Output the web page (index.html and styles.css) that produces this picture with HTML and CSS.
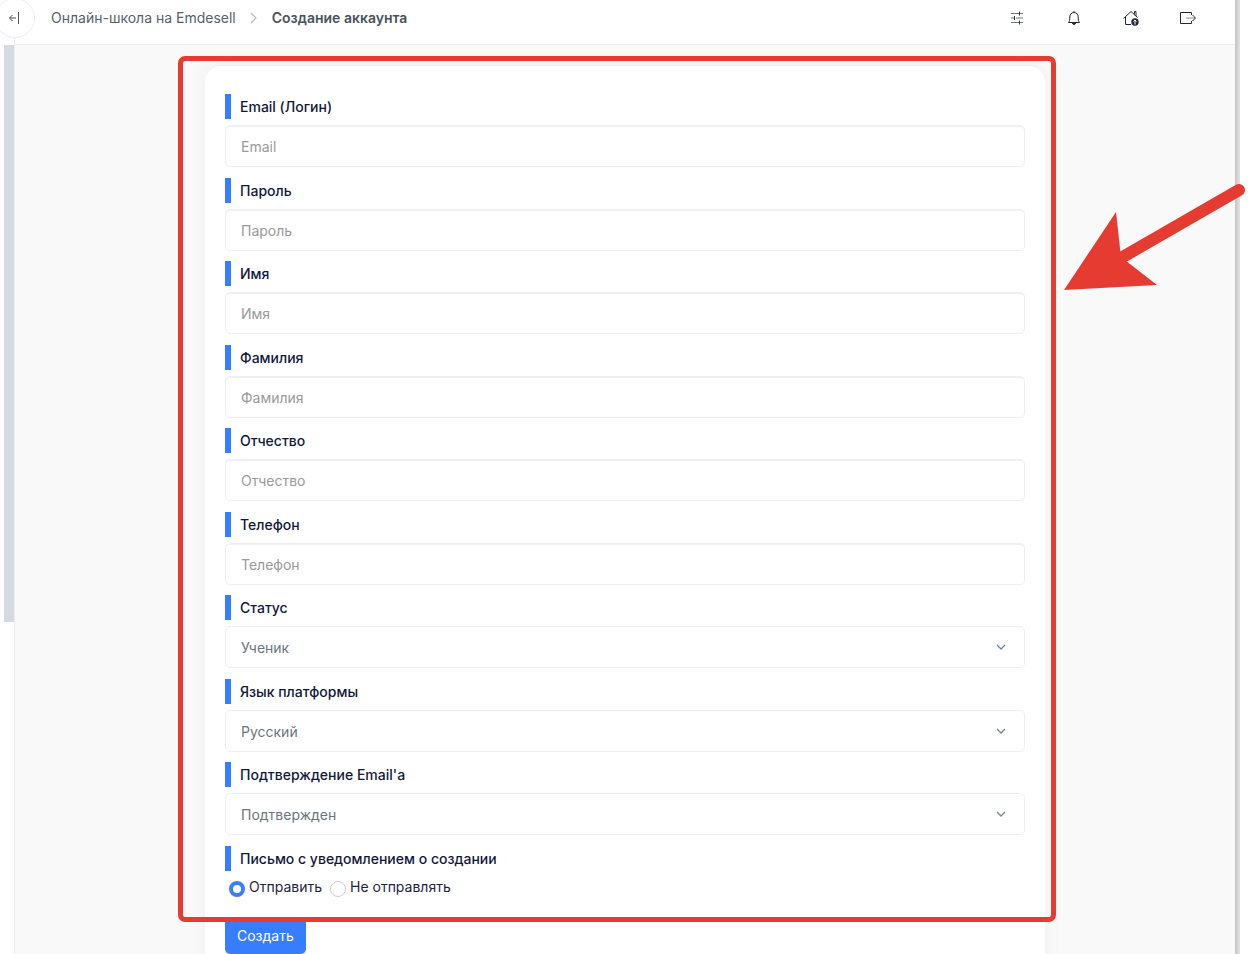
FILE: index.html
```html
<!DOCTYPE html>
<html lang="ru">
<head>
<meta charset="utf-8">
<title>Создание аккаунта</title>
<link rel="stylesheet" href="styles.css">
</head>
<body>
<div class="app">
  <aside class="sidebar">
    <div class="sidebar-thumb"></div>
    <button class="collapse" type="button" aria-label="Свернуть меню">
      <svg width="12" height="12" viewBox="0 0 12 12" fill="none" stroke="#4a4f58"><path d="M7 6H.5M3.500 3 .5 6l3 3"/><path d="M9.500 0v12"/></svg>
    </button>
  </aside>
  <div class="content">
    <header class="topbar">
      <nav class="crumbs" aria-label="Навигация">
        <a class="crumb" href="#">Онлайн-школа на Emdesell</a>
        <svg width="8" height="12" viewBox="0 0 8 12" fill="none" stroke="#b3b8be" stroke-width="1.2"><path d="M1 1l5 5-5 5"/></svg>
        <span class="crumb-current">Создание аккаунта</span>
      </nav>
      <div class="actions">
        <button class="action" type="button" aria-label="Настройки">
          <svg width="18" height="18" viewBox="0 0 18 18" fill="none" stroke="#70757b"><path d="M3 4.500h12M3 9h3M8 9h7M3 13.500h12"/><path stroke="#30343c" d="M11.500 2.500v4M6.500 7v4M11.500 11.500v4"/></svg>
        </button>
        <button class="action" type="button" aria-label="Уведомления">
          <svg width="18" height="18" viewBox="0 0 18 18" fill="none" stroke="#222638"><path d="M3.500 13.500h11c-1-1-1.300-2.300-1.300-5.500 0-2.500-1.700-4.500-4.200-4.500S4.800 5.500 4.800 8c0 3.200-.3 4.500-1.300 5.500Z"/><path d="M9 2v1.500"/><path fill="#222638" d="M7.500 14h3c0 2-3 2-3 0Z"/></svg>
        </button>
        <button class="action" type="button" aria-label="Главная">
          <svg width="18" height="18" viewBox="0 0 18 18" fill="none" stroke="#222638"><path d="M1.500 9.500 9 2.500l6.500 6M3.500 8v7.500H9M12.500 5.500v-3h1.500V7"/><circle cx="13" cy="13" r="3.700" fill="#222638" stroke="none"/><path stroke="#fff" d="M13 15.500v-4M11.500 12.500l1.500-1.500 1.500 1.500"/></svg>
        </button>
        <button class="action" type="button" aria-label="Выход">
          <svg width="18" height="18" viewBox="0 0 18 18" fill="none" stroke="#222638"><path d="M12.500 6V3.500h-11v11h11V12"/><path stroke="#8c9099" d="M7 9h9"/><path d="m13.500 6 3 3-3 3"/></svg>
        </button>
      </div>
    </header>
    <main class="main">
      <form class="card">
        <div class="field"><label class="label" for="email">Email (Логин)</label><input class="control" id="email" type="email" placeholder="Email"></div>
        <div class="field"><label class="label" for="password">Пароль</label><input class="control" id="password" type="password" placeholder="Пароль"></div>
        <div class="field"><label class="label" for="name">Имя</label><input class="control" id="name" type="text" placeholder="Имя"></div>
        <div class="field"><label class="label" for="surname">Фамилия</label><input class="control" id="surname" type="text" placeholder="Фамилия"></div>
        <div class="field"><label class="label" for="patronymic">Отчество</label><input class="control" id="patronymic" type="text" placeholder="Отчество"></div>
        <div class="field"><label class="label" for="phone">Телефон</label><input class="control" id="phone" type="tel" placeholder="Телефон"></div>
        <div class="field"><label class="label" for="status">Статус</label><select class="control select" id="status"><option>Ученик</option></select></div>
        <div class="field"><label class="label" for="language">Язык платформы</label><select class="control select" id="language"><option>Русский</option></select></div>
        <div class="field"><label class="label" for="confirm">Подтверждение Email'а</label><select class="control select" id="confirm"><option>Подтвержден</option></select></div>
        <fieldset class="choice">
          <legend class="label">Письмо с уведомлением о создании</legend>
          <div class="radios">
            <input class="radio" id="send" type="radio" name="notify" checked><label for="send">Отправить</label>
            <input class="radio" id="nosend" type="radio" name="notify"><label for="nosend">Не отправлять</label>
          </div>
        </fieldset>
        <button class="submit" type="submit">Создать</button>
        <div class="highlight"></div>
        <svg class="arrow" width="184" height="110" viewBox="0 0 184 110" fill="#e63b31"><path d="M175 10 57 78" stroke="#e63b31" stroke-width="12" stroke-linecap="round"/><path d="M0 110 52 32l5 45 36 28Z"/></svg>
      </form>
    </main>
  </div>
  <div class="edge"></div>
</div>
</body>
</html>
```

FILE: styles.css
```css
* {
  box-sizing: border-box;
}

body {
  margin: 0;
  background: #fff;
  color: #12183a;
  font: 14px/20px Inter, "Noto Sans", sans-serif;
}

button,
input,
select {
  font: inherit;
}

.app {
  display: flex;
  height: 100vh;
  padding-right: 13px;
  overflow: hidden;
}

.sidebar {
  position: relative;
  flex: 0 0 15px;
  padding: 45px 0 0 4px;
  border-right: 1px solid #ebecf2;
}

.sidebar-thumb {
  height: 577px;
  background: #d5dae2;
}

.collapse {
  position: absolute;
  top: -2px;
  left: -5px;
  display: flex;
  align-items: center;
  justify-content: center;
  width: 40px;
  height: 40px;
  padding: 0;
  border: 1px solid #ebecf4;
  border-radius: 50%;
  background: #fff;
}

.content {
  display: flex;
  flex: 1;
  flex-direction: column;
  min-width: 0;
}

.topbar {
  display: flex;
  flex: 0 0 45px;
  align-items: center;
  justify-content: space-between;
  padding: 0 38px 8px 36px;
  border-bottom: 1px solid #ebecf2;
}

.crumbs {
  display: flex;
  align-items: center;
  gap: 14px;
}

.crumb {
  color: #56616b;
  text-decoration: none;
}

.crumb-current {
  color: #4a535c;
  font-weight: 600;
}

.actions {
  display: flex;
  gap: 39px;
}

.action {
  display: flex;
  padding: 0;
  border: 0;
  background: none;
}

.main {
  flex: 1;
  min-height: 0;
  padding: 20px 20px 0;
  background: #f9f9f9;
}

.card {
  position: relative;
  max-width: 840px;
  margin: 0 auto;
  padding: 28px 20px 40px;
  border: 1px solid #f0f0f5;
  border-width: 1px 0;
  border-radius: 16px;
  background: #fff;
  box-shadow: 0 0 20px rgba(0, 0, 0, 0.04);
}

.field {
  display: flex;
  flex-direction: column;
  gap: 6px;
  margin-bottom: 10px;
}

.field:nth-child(odd) {
  margin-bottom: 11px;
}

.label {
  display: block;
  padding-left: 9px;
  border-left: 6px solid #377dff;
  font-weight: 500;
  line-height: 25px;
}

.control {
  width: 100%;
  height: 42px;
  padding: 0 15px;
  border: 1px solid #eeeef4;
  border-radius: 5px;
  background-color: #fff;
  box-shadow: inset 0 1px 0 #f1f1f3;
  color: #6c757d;
}

.control::placeholder {
  color: #999;
  opacity: 1;
}

.select {
  padding-top: 1px;
  appearance: none;
  background-image: url("data:image/svg+xml,%3Csvg xmlns='http://www.w3.org/2000/svg' width='10' height='6' fill='none' stroke='%2371869d' stroke-width='1.300'%3E%3Cpath d='M1 1l4 4 4-4'/%3E%3C/svg%3E");
  background-position: right 18px center;
  background-repeat: no-repeat;
  box-shadow: none;
}

.choice {
  margin: 0;
  padding: 0;
  border: 0;
}

.choice .label {
  width: 100%;
}

.radios {
  display: flex;
  align-items: center;
  padding: 6px 0 0 4px;
  color: #1f2440;
}

.radio {
  appearance: none;
  width: 16px;
  height: 16px;
  margin: 3px 4px 0 0;
  border: 1px solid #ccc;
  border-radius: 50%;
  background: #fff;
}

.radio:checked {
  border: 4px solid #377dff;
}

.radios label + .radio {
  margin-left: 8px;
}

.submit {
  height: 37px;
  margin-top: 20px;
  padding: 0 12px;
  border: 0;
  border-radius: 5px;
  background: #377dff;
  color: #fff;
}

/* Tutorial callout around the form */
.highlight {
  position: absolute;
  top: -10px;
  right: -11px;
  left: -27px;
  height: 866px;
  border: 5px solid #e63b31;
  border-radius: 7px;
  pointer-events: none;
}

.arrow {
  position: absolute;
  top: 114px;
  left: calc(100% + 19px);
  z-index: 1;
  pointer-events: none;
}

.edge {
  flex: 0 0 5px;
  background: linear-gradient(90deg, #c3c3c3, #e3e3e3);
}
```
